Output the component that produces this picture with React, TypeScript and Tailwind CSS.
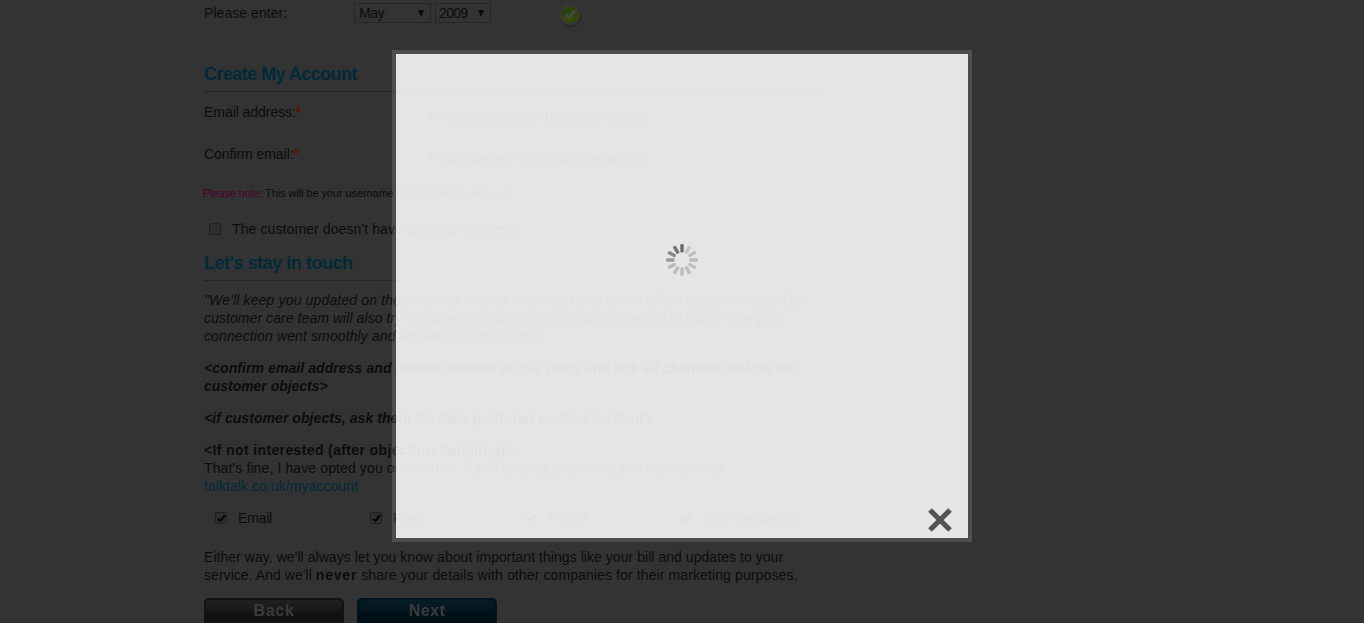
import React from "react";

function Tick({ checked = false }: { checked?: boolean }) {
  return (
    <span className="flex h-[12px] w-[12px] shrink-0 items-center justify-center rounded-[2px] border border-[#202020] bg-[#2f2f2f]">
      {checked && (
        <svg width="9" height="9" viewBox="0 0 9 9" fill="none" stroke="#060606" strokeWidth="2.2">
          <path d="M1 4.8 L3.4 7 L8 1.2" />
        </svg>
      )}
    </span>
  );
}

function Heading({ children, spacing }: { children: string; spacing: string }) {
  return (
    <h2 className="h-[28px] w-[622px] border-b border-dotted border-[#1d1d1d] text-[18px] leading-[20px] font-bold text-[#002a38]">
      <span className={spacing}>{children}</span>
    </h2>
  );
}

function Choice({ label, className, spacing }: { label: string; className: string; spacing: string }) {
  return (
    <label className={`flex shrink-0 items-center gap-[11px] ${className}`}>
      <Tick checked />
      <span className={spacing}>{label}</span>
    </label>
  );
}

function EmailRow({ label }: { label: string }) {
  return (
    <div className="flex h-[42px] items-start">
      <div className="w-[217px] shrink-0">
        <span className="tracking-[-0.05px]">{label}</span>
        <span className="font-bold text-[#5a1400]">*</span>
      </div>
      <div className="-mt-px h-[26px] w-[285px] border border-[#2d2d2d] pl-[4px] text-[13px] leading-[28px] tracking-[-0.12px]">
        TTAutomation0712491249@email.com
      </div>
    </div>
  );
}

function Spinner() {
  const shades = ["#6a6a6a", "#c6c6c6", "#c0c0c0", "#bcbcbc", "#c0c0c0", "#bebebe", "#bebebe", "#bebebe", "#b8b8b8", "#999999", "#858585", "#747474"];
  return (
    <svg width="32" height="32" viewBox="0 0 32 32">
      {shades.map((c, i) => (
        <rect key={i} x="14.3" y="0" width="3.4" height="8.5" rx="1.2" fill={c} transform={`rotate(${i * 30} 16 16)`} />
      ))}
    </svg>
  );
}

export default function App() {
  return (
    <div className="relative h-[623px] w-[1364px] overflow-hidden bg-[#333333] font-['Liberation_Sans',Arial,sans-serif] text-[14px] leading-[18px] whitespace-nowrap text-[#0c0c0c]">
      <main className="ml-[204px] flex w-[640px] flex-col">
        <div className="flex h-[64px] items-start">
          <div className="mt-[4px] w-[150px] tracking-[0.05px]">Please enter:</div>
          <div className="mt-[3px] flex h-[20px] w-[77px] items-center justify-between border border-[#262626] pr-[5px] pl-[4px]">
            <span className="tracking-[-0.3px]">May</span>
            <svg width="8" height="7" viewBox="0 0 8 7" fill="#0a0a0a"><path d="M1 0H7L4 7Z" /></svg>
          </div>
          <div className="mt-[3px] ml-[4px] flex h-[20px] w-[56px] items-center justify-between border border-[#262626] pr-[5px] pl-[3px]">
            <span className="tracking-[-0.6px]">2009</span>
            <svg width="8" height="7" viewBox="0 0 8 7" fill="#0a0a0a"><path d="M1 0H7L4 7Z" /></svg>
          </div>
          <svg className="mt-[3px] ml-[67px]" width="26" height="26" viewBox="0 0 26 26">
            <circle cx="13" cy="13.5" r="10.5" fill="#292929" />
            <circle cx="12" cy="12" r="10" fill="#3b3b3b" />
            <circle cx="12" cy="12" r="8.2" fill="#264600" />
            <path d="M4 13a8.2 8.2 0 0 0 16 0Z" fill="#304c00" />
            <path d="M7.5 11L11 15L17 7.5" fill="none" stroke="#474747" strokeWidth="3.2" />
          </svg>
        </div>

        <Heading spacing="tracking-[-0.56px]">Create My Account</Heading>
        <div className="h-[11px]" />
        <EmailRow label="Email address:" />
        <EmailRow label="Confirm email:" />
        <p className="-mt-[2px] -ml-px flex h-[35px] text-[11px] leading-[16px]">
          <span className="w-[62px] tracking-[-0.12px] text-[#4c002a]">Please note:</span>
          <span className="tracking-[-0.08px]">This will be your username for TalkTalk My Account</span>
        </p>
        <label className="flex h-[18px] items-center gap-[11px] pl-[5px]">
          <Tick />
          <span className="tracking-[0.1px]">The customer doesn't have an email address.</span>
        </label>
        <div className="h-[15px]" />
        <Heading spacing="tracking-[-0.46px]">Let's stay in touch</Heading>

        <p className="mt-[10px] italic">
          <span className="block tracking-[0.15px]">"We'll keep you updated on the progress of your order and any future offers or promotions. Our</span>
          <span className="block tracking-[0.07px]">customer care team will also try to call you within the first couple of weeks to make sure your</span>
          <span className="block tracking-[0.12px]">connection went smoothly and answer any questions"</span>
        </p>
        <p className="mt-[14px] font-bold italic">
          <span className="block tracking-[0.075px]">&lt;confirm email address and mobile number at this point and tick all channels unless the</span>
          <span className="block tracking-[-0.03px]">customer objects&gt;</span>
        </p>
        <p className="mt-[14px] font-bold italic tracking-[0.065px]">&lt;if customer objects, ask them for their preferred contact method&gt;</p>
        <p className="mt-[14px]">
          <b className="block tracking-[0.37px]">&lt;If not interested (after objection handling)&gt;</b>
          <span className="block tracking-[0.115px]">That's fine, I have opted you out for now, if you change your mind you can opt in at</span>
          <span className="block tracking-[0.06px] text-[#002a38]">talktalk.co.uk/myaccount</span>
        </p>
        <div className="mt-[14px] flex h-[18px] pl-[11px]">
          <Choice label="Email" className="w-[155px]" spacing="tracking-[-0.2px]" />
          <Choice label="Post" className="w-[155px]" spacing="tracking-[0px]" />
          <Choice label="Phone" className="w-[155px]" spacing="tracking-[0px]" />
          <Choice label="Text messages" className="w-[155px]" spacing="tracking-[-0.1px]" />
        </div>
        <p className="mt-[21px]">
          <span className="block tracking-[0.05px]">Either way, we'll always let you know about important things like your bill and updates to your</span>
          <span className="block tracking-[0.11px]">
            <span className="tracking-[0.05px]">service. And we'll </span>
            <b className="tracking-[0.8px]">never</b> share your details with other companies for their marketing purposes.
          </span>
        </p>
        <div className="mt-[14px] flex gap-[13px] text-[16px] font-bold text-[#3b3b3b]">
          <button className="h-[29px] w-[140px] rounded-[5px] border-2 border-[#131313] bg-linear-to-b from-[#202020] from-0% via-[#181818] via-45% to-[#111111] to-50% pb-[4px] leading-[20px] tracking-[0.7px]">Back</button>
          <button className="h-[29px] w-[140px] rounded-[5px] border-2 border-[#00131c] bg-linear-to-b from-[#061c25] from-0% via-[#03161f] via-45% to-[#000f18] to-50% pb-[4px] leading-[20px] tracking-[0.5px]">Next</button>
        </div>
      </main>

      <div className="absolute top-[50px] left-[392px] h-[492px] w-[580px] border-4 border-white/13 bg-white/[0.875] bg-clip-padding">
        <div className="flex h-full flex-col items-center justify-between pt-[190px] pb-[5px]">
          <Spinner />
          <button className="mr-[15px] self-end" aria-label="Close">
            <svg className="block" width="26" height="26" viewBox="0 0 26 26" stroke="#535353" strokeWidth="5.2">
              <path d="M3 3L23 23M23 3L3 23" />
            </svg>
          </button>
        </div>
      </div>
    </div>
  );
}
